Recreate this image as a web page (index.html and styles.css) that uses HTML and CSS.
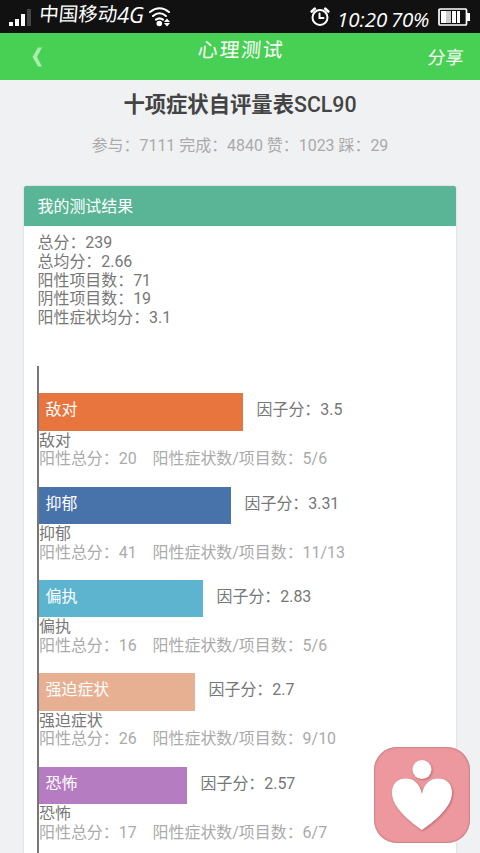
FILE: index.html
```html
<!DOCTYPE html>
<html lang="zh-CN">
<head>
    <meta charset="UTF-8">
    <meta name="viewport" content="width=device-width, initial-scale=1.0">
    <title>心理测试</title>
    <link rel="stylesheet" href="styles.css">
</head>
<body>

    <div class="status-bar">
        <svg class="signal" width="22" height="17" viewBox="0 0 22 17">
            <path fill="#fff" d="M0 13h4v4H0zM6 10h4v7H6zM12 5h4v12h-4z"/>
            <path fill="#444" d="M18 0h4v17h-4z"/>
        </svg>
        <span class="carrier">中国移动</span>
        <span class="network">4G</span>
        <svg class="wifi" width="22" height="20" viewBox="0 0 22 20">
            <g fill="none" stroke="#fff" stroke-width="2.1" stroke-linecap="round">
                <path d="M1 5Q10.500 -2.500 20 5M4 9Q10.500 3.500 17 9M7 12.700Q10.500 10 14 12.700"/>
            </g>
            <circle cx="10.300" cy="16.500" r="2.800" fill="#fff"/>
            <path fill="#fff" d="M18 11.500l3 3.500h-6zM18 19.500l3-3.500h-6z"/>
        </svg>
        <svg class="alarm" width="20" height="20" viewBox="0 0 20 20">
            <g fill="none" stroke="#fff" stroke-width="2" stroke-linecap="round">
                <circle cx="10" cy="10.500" r="7.500"/>
                <path d="M9.500 6.500v4.500h4"/>
                <path stroke-width="2.600" d="M1.700 4.500l3-2.800M18.300 4.500l-3-2.800"/>
            </g>
        </svg>
        <span class="clock">10:20</span>
        <span class="percent">70%</span>
        <svg class="battery" width="33" height="18" viewBox="0 0 33 18">
            <rect x="1" y="1" width="27.500" height="16" rx="1" fill="none" stroke="#fff" stroke-width="1.700"/>
            <path fill="#fff" d="M3 3h5v12H3zM14 3h4v12h-4zM19 3h3v12h-3zM29 5h3v8h-3z"/>
            <path fill="#ccc" d="M8 3h5v12H8z"/>
        </svg>
    </div>

    <header>
        <svg class="back" width="11" height="20" viewBox="0 0 11 20">
            <path fill="#a9ecac" d="M6 .5h4L5 10l5 9.500H6L.5 10z"/>
        </svg>
        <span class="header-title">心理测试</span>
        <span class="share">分享</span>
    </header>

    <h1>十项症状自评量表<span>SCL90</span></h1>
    <p class="counts">参与：7111 完成：4840 赞：1023 踩：29</p>

    <div class="card">
        <h2>我的测试结果</h2>
        <div class="summary">
            <div>总分：239</div>
            <div>总均分：2.66</div>
            <div>阳性项目数：71</div>
            <div>阴性项目数：19</div>
            <div>阳性症状均分：3.1</div>
        </div>

        <div class="chart">
            <div class="factor">
                <div class="row">
                    <div class="bar orange" style="width: 204px">敌对</div>
                    <span>因子分：3.5</span>
                </div>
                <div class="name">敌对</div>
                <div class="detail"><span>阳性总分：20</span><span>阳性症状数/项目数：5/6</span></div>
            </div>
            <div class="factor">
                <div class="row">
                    <div class="bar blue" style="width: 192px">抑郁</div>
                    <span>因子分：3.31</span>
                </div>
                <div class="name">抑郁</div>
                <div class="detail"><span>阳性总分：41</span><span>阳性症状数/项目数：11/13</span></div>
            </div>
            <div class="factor">
                <div class="row">
                    <div class="bar cyan" style="width: 164px">偏执</div>
                    <span>因子分：2.83</span>
                </div>
                <div class="name">偏执</div>
                <div class="detail"><span>阳性总分：16</span><span>阳性症状数/项目数：5/6</span></div>
            </div>
            <div class="factor">
                <div class="row">
                    <div class="bar peach" style="width: 156px">强迫症状</div>
                    <span>因子分：2.7</span>
                </div>
                <div class="name">强迫症状</div>
                <div class="detail"><span>阳性总分：26</span><span>阳性症状数/项目数：9/10</span></div>
            </div>
            <div class="factor">
                <div class="row">
                    <div class="bar purple" style="width: 148px">恐怖</div>
                    <span>因子分：2.57</span>
                </div>
                <div class="name">恐怖</div>
                <div class="detail"><span>阳性总分：17</span><span>阳性症状数/项目数：6/7</span></div>
            </div>
        </div>
    </div>

    <!-- floating button over the page -->
    <div class="float-btn">
        <svg width="96" height="96" viewBox="0 0 96 96">
            <g fill="#fff">
                <circle cx="48" cy="22.500" r="9.500"/>
                <path d="M48 83C38 76 18 61 18 46C18 36 24 31.500 32 31.500C40 31.500 46 37 48 47C50 37 56 31.500 64 31.500C72 31.500 78 36 78 46C78 61 58 76 48 83Z"/>
            </g>
        </svg>
    </div>

</body>
</html>
```

FILE: styles.css
```css
* {
    box-sizing: border-box;
}

body {
    margin: 0;
    height: 853px;
    overflow: hidden;
    position: relative;
    display: flex;
    flex-direction: column;
    background: #eff1f3;
    color: #777;
    font-family: Roboto, 'Noto Sans CJK SC', sans-serif;
    font-size: 15.95px;
    line-height: 18.67px;
}

.status-bar {
    display: flex;
    flex-shrink: 0;
    height: 33px;
    padding-left: 9px;
    background: #111;
    color: #fff;
    white-space: nowrap;
}

.signal {
    margin-top: 9px;
}

.carrier {
    width: 78px;
    margin: 6px 0 0 8px;
    font-size: 19.5px;
    transform: skewX(-5deg);
}

.network {
    width: 29px;
    margin-top: 5px;
    font-family: 'Open Sans', sans-serif;
    font-size: 22px;
    font-style: italic;
}

.wifi {
    margin: 7px 0 0 3px;
}

.alarm {
    margin: 7px 0 0 139px;
}

.clock, .percent {
    margin-top: 10px;
    font-family: 'Open Sans', sans-serif;
    font-size: 20.5px;
    font-style: italic;
}

.clock {
    width: 53px;
    margin-left: 7px;
}

.percent {
    width: 42px;
    margin-left: 1px;
    letter-spacing: -0.3px;
}

.battery {
    margin: 8px 0 0 5px;
}

header {
    display: grid;
    grid-template-columns: 1fr auto 1fr;
    flex-shrink: 0;
    height: 47px;
    padding: 0 17px 0 32px;
    background: #47d053;
    color: #fff;
}

.back {
    margin-top: 14px;
}

.header-title {
    margin: 8px 0 0 -15px;
    font-size: 20px;
    letter-spacing: 1.6px;
    transform: skewX(-5deg);
}

.share {
    justify-self: end;
    margin-top: 16px;
    font-size: 18px;
    transform: skewX(-5deg);
}

h1 {
    margin: 12px 0 0;
    color: #444;
    font-size: 21.33px;
    font-weight: bold;
    line-height: 26px;
    text-align: center;
}

h1 span {
    font-weight: 500;
}

.counts {
    margin: 19px 0 0;
    color: #aaa;
    text-align: center;
}

.card {
    flex-shrink: 0;
    margin: 30.67px 24px 0;
    background: #fff;
    border-radius: 2px;
    box-shadow: 0 0 2px rgba(0, 0, 0, 0.2);
}

h2 {
    height: 40px;
    margin: 0;
    padding-left: 13.5px;
    border-radius: 2px 2px 0 0;
    background: #5ab596;
    color: #fff;
    font-size: 15.95px;
    font-weight: normal;
    line-height: 41px;
}

.summary {
    padding: 8px 13.5px 38.67px;
}

.chart {
    margin-left: 13px;
    padding-top: 27px;
    border-left: 2px solid #777;
}

.factor {
    height: 93.33px;
}

.row {
    display: flex;
    gap: 13.5px;
    height: 38.33px;
    line-height: 33.5px;
}

.bar {
    height: 37.33px;
    padding-left: 6.5px;
    color: #fff;
}

.orange {
    background: #e8743e;
}

.blue {
    background: #4873aa;
}

.cyan {
    background: #5cb4cf;
}

.peach {
    background: #e7b092;
}

.purple {
    background: #b57cc1;
}

.detail {
    display: flex;
    gap: 16px;
    color: #aaa;
}

.float-btn {
    position: absolute;
    left: 374px;
    top: 747px;
    width: 96px;
    height: 96px;
    border-radius: 23px;
    background: #ec989e;
    box-shadow: inset 0 0 2px rgba(110, 50, 55, 0.7);
}

.float-btn g {
    filter: drop-shadow(1px 1px 1px rgba(140, 60, 65, 0.5));
}
```
